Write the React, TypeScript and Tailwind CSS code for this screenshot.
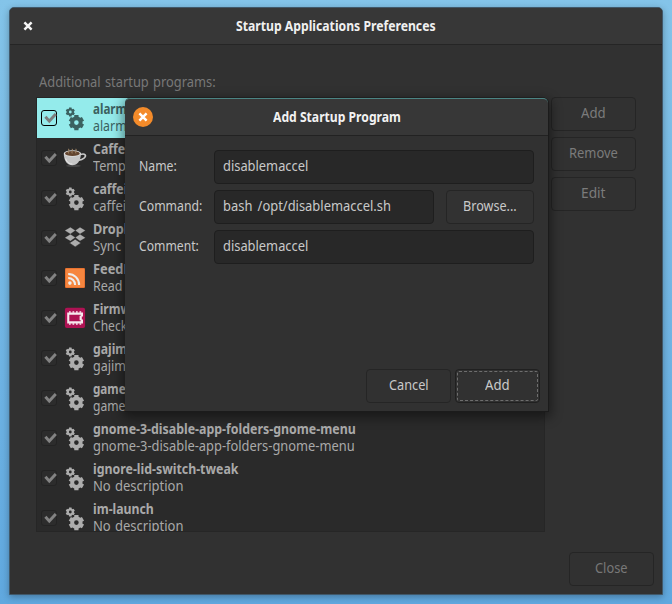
import { useLayoutEffect, useRef, useState } from 'react';
import clsx from 'clsx';

/** Condensed UI text: the label is squeezed to the given width. */
function Label({ text, width, className }: { text: string; width: number; className?: string }) {
  const ref = useRef<HTMLSpanElement>(null);
  const [scale, setScale] = useState(0.88);
  useLayoutEffect(() => {
    if (ref.current) setScale(width / ref.current.offsetWidth);
  }, [text, width]);
  return (
    <span className={clsx('block h-[17px] shrink-0 leading-[17px] whitespace-nowrap', className)} style={{ width }}>
      <span ref={ref} className="inline-block origin-left" style={{ transform: `scaleX(${scale})` }}>
        {text}
      </span>
    </span>
  );
}

function gearPath(cx: number, cy: number, r: number, inner: number, hole: number, teeth: number) {
  const pts: string[] = [];
  const step = (Math.PI * 2) / teeth;
  for (let i = 0; i < teeth; i++) {
    const a = i * step - Math.PI / 2;
    const corners: [number, number][] = [[-0.34, inner], [-0.26, r], [0.26, r], [0.34, inner]];
    corners.forEach(([o, rad]) => {
      pts.push(`${(cx + rad * Math.cos(a + o * step)).toFixed(2)} ${(cy + rad * Math.sin(a + o * step)).toFixed(2)}`);
    });
  }
  return `M${pts.join('L')}ZM${cx - hole} ${cy}a${hole} ${hole} 0 1 0 ${hole * 2} 0a${hole} ${hole} 0 1 0 ${-hole * 2} 0Z`;
}

const BIG_GEAR = gearPath(12.4, 16.6, 7.9, 6.2, 2.3, 6);
const SMALL_GEAR = gearPath(6.3, 6, 4.7, 3.7, 1.4, 6);

function Gears({ color }: { color: string }) {
  return (
    <svg width="24" height="26" viewBox="0 0 24 26" fill={color} fillRule="evenodd">
      <path d={SMALL_GEAR} />
      <path d={BIG_GEAR} />
    </svg>
  );
}

function Coffee() {
  return (
    <svg width="24" height="24" viewBox="0 0 24 24" className="-ml-px overflow-visible">
      <ellipse cx="10.4" cy="19.8" rx="7.5" ry="1.3" fill="#444" />
      <path d="M17.2 8.6c5-1.7 6.7 1 3.8 3.6-1.4 1.2-3 1.8-5 1.9" fill="none" stroke="#c9c9c9" strokeWidth="1.6" />
      <path d="M.8 7.5c.1 7.6 3.5 11.7 8.5 11.7s8.3-4 8.7-11.7Z" fill="#c6c6c6" />
      <path d="M2.6 12.5c1.2 3.8 3.8 5.6 6.8 5.6" fill="none" stroke="#e8e8e8" />
      <ellipse cx="9.4" cy="7.5" rx="8.6" ry="3.3" fill="#ddd" />
      <ellipse cx="9.4" cy="7.4" rx="7.4" ry="2.5" fill="#62442e" />
      <path d="M5.6 7.4c-1-2 1-2 0-4.6M9.2 7.4c-1-2 1-2 0-4.6M12.9 7.4c-1-2 1-2 0-4.6" fill="none" stroke="#a48969" strokeWidth="1" />
    </svg>
  );
}

function Dropbox() {
  return (
    <svg width="24" height="24" viewBox="0 0 24 24" fill="#adadad" className="overflow-visible">
      <path d="M6.4 1.2 11.3 4.5 6.4 7.9.8 4.5ZM16 1.2 21.4 4.5 16 7.9 11.3 4.5ZM6.4 8.3 11.3 11.6 6.4 15 .8 11.7ZM16 8.3 21.4 11.7 16 15 11.3 11.6Z" stroke="#2a2a2a" strokeWidth=".2" />
      <path d="m5.4 17 .9-.6 4.9-3.2 4.9 3.2.9.6-5.8 3.9Z" stroke="#2a2a2a" strokeWidth=".6" />
    </svg>
  );
}

function Feed() {
  return (
    <svg width="24" height="24" viewBox="0 0 24 24">
      <rect x="1" y="2" width="20" height="20" rx="1.2" fill="#e87230" />
      <path d="M2 3h18v18H2Z" fill="#f6863f" />
      <circle cx="5.9" cy="17.1" r="1.8" fill="#eee" />
      <path d="M4.2 12c3.9 0 6.9 3 6.9 6.9M4.2 8c6.2 0 10.9 4.7 10.9 10.9" stroke="#eee" strokeWidth="2.1" fill="none" />
    </svg>
  );
}

function Firmware() {
  return (
    <svg width="24" height="24" viewBox="0 0 24 24">
      <rect x=".9" y="1.7" width="20.2" height="20.3" rx="2" fill="#ae1253" />
      <path d="M3.2 6.6H19v3.9h-1.2v3H19v3.9H3.2ZM5.3 8.7v6.6h11.4v-1.1h-1.1V9.8h1.1V8.7Z" fill="#f7e9ee" fillRule="evenodd" />
      <path d="M5 5.2h1.7v1.6H5zM8.5 5.2h1.7v1.6H8.5zM12 5.2h1.7v1.6H12zM15.5 5.2h1.7v1.6h-1.7zM5 17.2h1.7v1.6H5zM8.5 17.2h1.7v1.6H8.5zM12 17.2h1.7v1.6H12zM15.5 17.2h1.7v1.6h-1.7z" fill="#f7e9ee" />
    </svg>
  );
}

type Icon = 'gears' | 'coffee' | 'dropbox' | 'feed' | 'firmware';
type Program = { name: string; nameW: number; info: string; infoW: number; icon: Icon; selected?: boolean };

const PROGRAMS: Program[] = [
  { name: 'alarm', nameW: 34, info: 'alarm', infoW: 33.5, icon: 'gears', selected: true },
  { name: 'Caffe', nameW: 32.5, info: 'Temp', infoW: 32.5, icon: 'coffee' },
  { name: 'caffei', nameW: 34.5, info: 'caffei', infoW: 33.5, icon: 'gears' },
  { name: 'Dropb', nameW: 39, info: 'Sync', infoW: 28, icon: 'dropbox' },
  { name: 'FeedR', nameW: 38.5, info: 'Read', infoW: 29.5, icon: 'feed' },
  { name: 'Firmw', nameW: 38, info: 'Check', infoW: 34.5, icon: 'firmware' },
  { name: 'gajim', nameW: 34, info: 'gajim', infoW: 33, icon: 'gears' },
  { name: 'game', nameW: 32.5, info: 'game', infoW: 32, icon: 'gears' },
  { name: 'gnome-3-disable-app-folders-gnome-menu', nameW: 262.5, info: 'gnome-3-disable-app-folders-gnome-menu', infoW: 262, icon: 'gears' },
  { name: 'ignore-lid-switch-tweak', nameW: 145.5, info: 'No description', infoW: 90, icon: 'gears' },
  { name: 'im-launch', nameW: 60.5, info: 'No description', infoW: 90, icon: 'gears' },
];

function ProgramIcon({ icon, selected }: { icon: Icon; selected?: boolean }) {
  if (icon === 'coffee') return <Coffee />;
  if (icon === 'dropbox') return <Dropbox />;
  if (icon === 'feed') return <Feed />;
  if (icon === 'firmware') return <Firmware />;
  return <Gears color={selected ? '#3b6160' : '#adadad'} />;
}

function Row({ p }: { p: Program }) {
  return (
    <div className={clsx('flex h-10 shrink-0 items-start pl-1', p.selected ? 'bg-[#94ebeb] text-[#3b6160]' : 'text-[#a9a9a9]')}>
      <span className={clsx('mt-3 h-4 w-4 shrink-0 rounded-[3px] border', p.selected ? 'border-black' : 'border-[#232323] bg-[#2c2c2c]')}>
        <svg width="16" height="16" viewBox="0 0 16 16" className="-mt-px -ml-px">
          <path d="m4.4 6.7 3.9 4.4 6.5-7" fill="none" stroke={p.selected ? '#7d7d7d' : '#828282'} strokeWidth="2.9" />
        </svg>
      </span>
      <span className="mt-[8px] ml-[7px] w-6 shrink-0">
        <ProgramIcon icon={p.icon} selected={p.selected} />
      </span>
      <span className="mt-[2px] ml-[5px]">
        <Label text={p.name} width={p.nameW} className="font-bold" />
        <Label text={p.info} width={p.infoW} className="[word-spacing:1px]" />
      </span>
    </div>
  );
}

function Button({ text, width, className }: { text: string; width: number; className?: string }) {
  return (
    <button className={clsx('flex h-[34px] shrink-0 items-center justify-center rounded-[4px] border border-[#252525] pb-[4px]', className)}>
      <Label text={text} width={width} />
    </button>
  );
}

function Field({ label, labelW, value, valueW, browse }: { label: string; labelW: number; value: string; valueW: number; browse?: boolean }) {
  return (
    <div className="flex h-[34px] items-center">
      <div className="w-[75px] shrink-0 pb-[4px]">
        <Label text={label} width={labelW} />
      </div>
      <div className="flex h-[34px] flex-1 items-center rounded-[4px] border border-[#1e1e1e] bg-[#282828] pb-[4px] pl-2">
        <Label text={value} width={valueW} className="[word-spacing:2px]" />
      </div>
      {browse && <Button text="Browse..." width={54} className="ml-3 w-[88px] border-[#212121] bg-[#323232]" />}
    </div>
  );
}

function Cross({ color }: { color: string }) {
  return (
    <svg width="8" height="8" viewBox="0 0 8 8" className="overflow-visible">
      <path d="m.4.4 7.2 7.2M7.6.4.4 7.6" stroke={color} strokeWidth="2.5" />
    </svg>
  );
}

function Dialog() {
  return (
    <section className="absolute top-[98px] left-[125px] flex h-[314px] w-[424px] flex-col rounded-t-[5px] border-r border-b border-[#1b1b1b] bg-[#313131] text-[#c9c9c9] shadow-[0_3px_12px_2px_rgba(0,0,0,0.45)]">
      <header className="flex h-[38px] shrink-0 items-center rounded-t-[5px] border-t border-b border-t-[#4b8483] border-b-[#222] bg-[#373737] pl-[8px]">
        <span className="flex h-[20px] w-[20px] items-center justify-center rounded-full bg-[#f48b2a]">
          <Cross color="#fff" />
        </span>
        <Label text="Add Startup Program" width={127.5} className="mb-px ml-[120px] font-bold text-[#f2f2f2]" />
      </header>
      <div className="flex flex-col gap-[6px] pt-[14px] pr-[14px] pl-[14px]">
        <Field label="Name:" labelW={37.5} value="disablemaccel" valueW={85.5} />
        <Field label="Command:" labelW={63} value="bash /opt/disablemaccel.sh" valueW={168} browse />
        <Field label="Comment:" labelW={60} value="disablemaccel" valueW={85.5} />
      </div>
      <footer className="mt-auto flex justify-end gap-[4px] pr-[8px] pb-[8px]">
        <Button text="Cancel" width={40} className="w-[85px] border-[#212121]" />
        <div className="h-[34px] w-[85px] rounded-[4px] border border-[#202020] p-px">
          <button className="flex h-full w-full items-center justify-center rounded-[2px] border border-dashed border-[#6e6e6e] pb-[4px]">
            <Label text="Add" width={24.5} />
          </button>
        </div>
      </footer>
    </section>
  );
}

export default function App() {
  return (
    <div className="relative h-[604px] w-[672px] overflow-hidden bg-linear-to-b from-[#84c4e9] to-[#60a8df] pt-[7px] pl-[9px] font-['Noto_Sans','Open_Sans',sans-serif] text-[14px]">
      <main className="flex h-[588px] w-[654px] flex-col rounded-t-[5px] border border-[#40586a] bg-[#313131] shadow-[0_2px_7px_rgba(0,0,0,0.3)]">
        <header className="flex h-[37px] shrink-0 items-center rounded-t-[4px] border-b border-[#252525] bg-[#373737] pl-[14px]">
          <Cross color="#f5f5f5" />
          <Label text="Startup Applications Preferences" width={199.5} className="mb-[2px] ml-[204px] font-bold text-[#f0f0f0]" />
        </header>
        <div className="flex flex-1 flex-col pl-[26px]">
          <div className="h-[52px] pt-[28px] pl-[3px] text-[#787878]">
            <Label text="Additional startup programs:" width={176.5} className="[word-spacing:1px]" />
          </div>
          <div className="flex gap-[6px]">
            <div className="flex h-[435px] w-[509px] flex-col overflow-hidden border border-[#262626] bg-[#2a2a2a]">
              {PROGRAMS.map((p) => (
                <Row key={p.name} p={p} />
              ))}
            </div>
            <div className="flex flex-col gap-[6px] text-[#7b7b7b]">
              <Button text="Add" width={24.5} className="w-[85px] pr-px" />
              <Button text="Remove" width={49} className="w-[85px] pr-px" />
              <Button text="Edit" width={24.5} className="w-[85px] pr-px" />
            </div>
          </div>
          <div className="mt-5 flex justify-end pr-2 text-[#787878]">
            <Button text="Close" width={33} className="w-[85px]" />
          </div>
        </div>
      </main>
      <Dialog />
    </div>
  );
}
